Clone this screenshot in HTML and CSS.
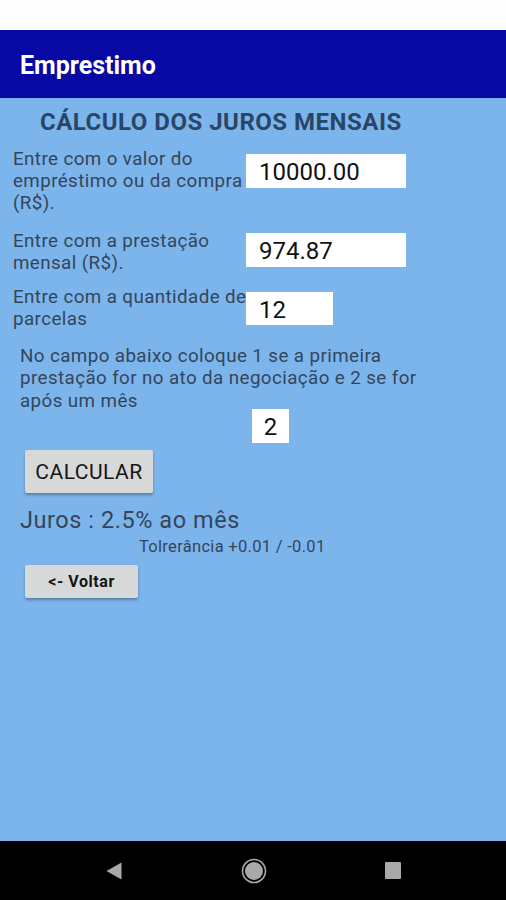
FILE: index.html
```html
<!DOCTYPE HTML>
<html>
<head>
<meta charset="utf-8">
<title>Emprestimo</title>
<link rel="stylesheet" href="styles.css">
</head>

<body>
<div class="status"></div>
<div class="appbar">Emprestimo</div>

<div class="content">
	<h1 class="title">CÁLCULO DOS JUROS MENSAIS</h1>

	<div class="row row1">
		<p class="label">Entre com o valor do empréstimo ou da compra (R$).</p>
		<div class="field wide">10000.00</div>
	</div>
	<div class="row row2">
		<p class="label">Entre com a prestação mensal (R$).</p>
		<div class="field wide">974.87</div>
	</div>
	<div class="row row3">
		<p class="label">Entre com a quantidade de parcelas</p>
		<div class="field mid">12</div>
	</div>

	<p class="note">No campo abaixo coloque 1 se a primeira prestação for no ato da negociação e 2 se for após um mês</p>
	<div class="field small">2</div>

	<button class="btn calc">CALCULAR</button>
	<p class="result">Juros : 2.5% ao mês</p>
	<p class="tol">Tolrerância +0.01 / -0.01</p>
	<button class="btn back">&lt;- Voltar</button>
</div>

<div class="navbar">
	<svg width="16" height="18" viewBox="0 0 16 18"><path d="M15.5 0.5 L0.5 9 L15.5 17.5 Z" fill="#a9a9a9"/></svg>
	<svg width="26" height="26" viewBox="0 0 26 26"><circle cx="13" cy="13" r="11.5" fill="none" stroke="#a9a9a9" stroke-width="1.6"/><circle cx="13" cy="13" r="9" fill="#a9a9a9"/></svg>
	<svg width="16" height="17" viewBox="0 0 16 17"><rect x="0" y="0" width="16" height="17" rx="1" fill="#a9a9a9"/></svg>
</div>
</body>
</html>
```

FILE: styles.css
```css
* {margin:0; padding:0; box-sizing:border-box;}
body {width:506px; font-family:Roboto, "Liberation Sans", sans-serif; background:#000;}

.status {height:30px; background:#fdfdfd;}
.appbar {
	height:68px;
	background:#0808a2;
	color:#fff;
	font-size:25px;
	font-weight:bold;
	padding:3px 0 0 20px;
	display:flex;
	align-items:center;
}

.content {
	height:743px;
	background:#7cb5ec;
	padding-top:10px;
}
.title {
	font-size:24px;
	line-height:28px;
	letter-spacing:0.5px;
	color:#2b4567;
	margin-left:40px;
	font-weight:bold;
}

.row {display:flex; align-items:flex-start; padding-left:13px;}
.row1 {margin-top:12px;}
.row2 {margin-top:15.5px;}
.row3 {margin-top:12px;}
.label {
	width:236px;
	font-size:18.8px;
	line-height:22px;
	letter-spacing:0.4px;
	color:#34455a;
}
.field {
	background:#fff;
	color:#111;
	font-size:24px;
	height:34px;
	padding-top:2px;
	line-height:32px;
}
.wide {width:160px; padding-left:13px; margin-left:-3px;}
.row1 .field {margin-top:6px;}
.row2 .field {margin-top:3px;}
.row3 .field {margin-top:6.5px; height:33px;}
.mid {width:87px; padding-left:13px; margin-left:-3px;}

.note {
	margin:15px 0 0 20px;
	width:420px;
	font-size:18.8px;
	line-height:22.5px;
	letter-spacing:0.4px;
	color:#34455a;
}
.small {
	width:37px;
	margin:-3px 0 0 252px;
	text-align:center;
}

.btn {
	display:block;
	border:none;
	background:#d7d8d8;
	border-radius:2px;
	box-shadow:0 2px 3px rgba(0,0,0,0.3);
	font-family:Roboto, "Liberation Sans", sans-serif;
	color:#151515;
	margin-left:25px;
}
.calc {margin-top:7px; width:128px; height:43px; font-size:21px; letter-spacing:0.5px;}
.back {margin-top:8px; width:113px; height:33px; font-size:16px; letter-spacing:0.55px; font-weight:bold;}

.result {
	margin:13px 0 0 20px;
	font-size:23.5px;
	line-height:28px;
	letter-spacing:0.55px;
	color:#34455a;
}
.tol {
	margin:3px 0 0 139px;
	font-size:16.5px;
	line-height:20px;
	letter-spacing:0.3px;
	color:#34455a;
}

.navbar {
	height:59px;
	display:flex;
	align-items:center;
	justify-content:space-between;
	padding:0 105px 0 106px;
}
```
